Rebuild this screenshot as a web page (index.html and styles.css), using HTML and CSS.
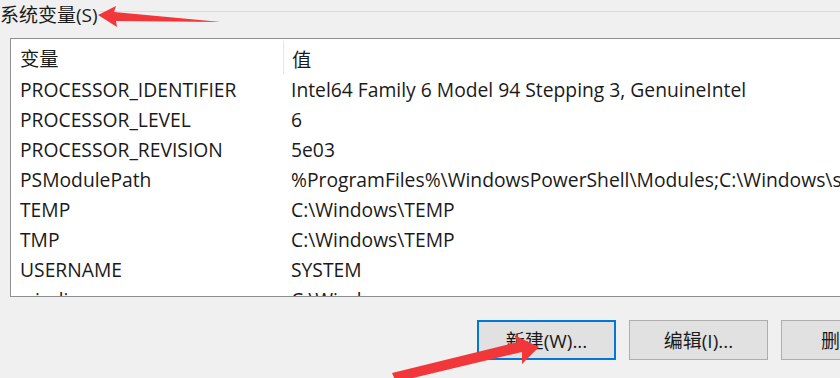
FILE: index.html
```html
<!DOCTYPE html>
<html lang="zh-CN">
<head>
    <meta charset="UTF-8">
    <title>系统变量</title>
    <link rel="stylesheet" href="styles.css">
</head>
<body>
    <div class="group-title">
        <span class="group-label">系统变量(S)</span>
        <span class="group-line"></span>
    </div>

    <div class="var-list">
        <div class="var-row var-head">
            <span class="col-name">变量</span>
            <span class="col-value">值</span>
        </div>
        <div class="var-row"><span class="col-name">PROCESSOR_IDENTIFIER</span><span class="col-value">Intel64 Family 6 Model 94 Stepping 3, GenuineIntel</span></div>
        <div class="var-row"><span class="col-name">PROCESSOR_LEVEL</span><span class="col-value">6</span></div>
        <div class="var-row"><span class="col-name">PROCESSOR_REVISION</span><span class="col-value">5e03</span></div>
        <div class="var-row"><span class="col-name">PSModulePath</span><span class="col-value">%ProgramFiles%\WindowsPowerShell\Modules;C:\Windows\system32\WindowsPowerShell\v1.0\Modules</span></div>
        <div class="var-row"><span class="col-name">TEMP</span><span class="col-value">C:\Windows\TEMP</span></div>
        <div class="var-row"><span class="col-name">TMP</span><span class="col-value">C:\Windows\TEMP</span></div>
        <div class="var-row"><span class="col-name">USERNAME</span><span class="col-value">SYSTEM</span></div>
        <div class="var-row"><span class="col-name">windir</span><span class="col-value">C:\Windows</span></div>
    </div>

    <div class="btn-bar">
        <button class="btn btn-default">新建(W)...</button>
        <button class="btn">编辑(I)...</button>
        <button class="btn">删除(L)</button>
    </div>

    <!-- red annotation arrows drawn over the dialog -->
    <svg class="marks" width="840" height="378" viewBox="0 0 840 378">
        <polygon fill="#f2373b" points="98,15 116,6 114,12 221,22 116,21 117,27"/>
        <polygon fill="#f2373b" points="539,347 514,335 518,342 392,373 396,382 522,352 522,364"/>
    </svg>
</body>
</html>
```

FILE: styles.css
```css
body {
    margin: 0;
    width: 840px;
    height: 378px;
    overflow: hidden;
    position: relative;
    background-color: #f0f0f0;
    color: #1a1a1a;
    font-family: "Open Sans", "Noto Sans CJK SC", sans-serif;
    font-size: 19.3px;
}
.group-title {
    display: flex;
    align-items: center;
    height: 24px;
    margin-top: 3px;
}
.group-label {
    font-size: 19px;
    line-height: 24px;
    padding-right: 2px;
}
.group-line {
    flex: 1;
    border-top: 1px solid #dadada;
    margin-top: -7px;
}
.var-list {
    margin: 11px 0 0 10px;
    width: 900px;
    height: 257px;
    border: 1px solid #8e8f8f;
    background: white;
    overflow: hidden;
}
.var-row {
    display: flex;
    align-items: center;
    height: 30px;
    white-space: nowrap;
}
.var-head {
    height: 35px;
    padding-top: 4px;
    box-sizing: border-box;
}
.col-name {
    width: 263px;
    padding-left: 9px;
    flex-shrink: 0;
}
.col-value {
    padding-left: 8px;
}
.var-head .col-name {
    border-right: 1px solid #e5e5e5;
    height: 31px;
    line-height: 31px;
    margin-top: -2px;
    padding-top: 2px;
    box-sizing: content-box;
}
.btn-bar {
    display: flex;
    gap: 13px;
    padding: 23px 0 0 477px;
}
.btn {
    flex-shrink: 0;
    width: 139px;
    height: 40px;
    background: #e1e1e1;
    border: 1px solid #adadad;
    font-family: inherit;
    font-size: 19px;
    color: #1a1a1a;
    padding: 0;
}
.btn-default {
    border: 2px solid #0078d7;
}
.marks {
    position: absolute;
    left: 0;
    top: 0;
}
```
